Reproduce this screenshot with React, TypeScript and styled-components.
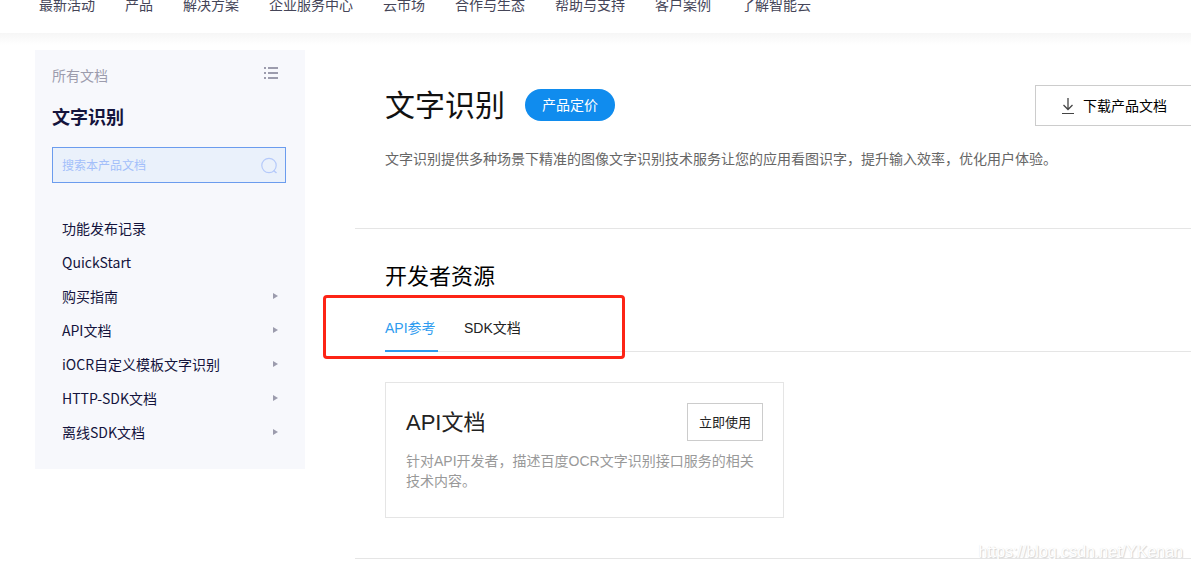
import React from "react";
import styled, { createGlobalStyle } from "styled-components";

const GlobalStyle = createGlobalStyle`
  *, *::before, *::after { box-sizing: border-box; }
  body {
    margin: 0;
    background: #fff;
    color: #000;
    font: 14px/20px "Liberation Sans", "Noto Sans CJK SC", sans-serif;
  }
  h1, h2, h3, p, ul { margin: 0; padding: 0; font-weight: 400; }
  ul { list-style: none; }
  a { color: inherit; text-decoration: none; }
  button { font-family: inherit; cursor: pointer; }
`;

const Page = styled.div`
  position: relative;
  overflow: hidden;
`;

const Header = styled.header`
  height: 33px;
`;

const Nav = styled.nav`
  display: flex;
  gap: 30px;
  padding-left: 39px;
  line-height: 10px;
  color: #454558;
  white-space: nowrap;
`;

const Body = styled.div`
  display: flex;
  align-items: flex-start;
  gap: 50px;
  padding: 17px 0 0 35px;
  background: linear-gradient(#f6f6f6, #fff 12px);
`;

const Sidebar = styled.aside`
  flex: 0 0 270px;
  padding: 15px 19px 20px 17px;
  background: #f7f8fc;
  color: #14143c;
  font-family: "Noto Sans CJK SC", sans-serif;
`;

const SideTop = styled.div`
  display: flex;
  justify-content: space-between;
  padding-right: 8px;
  color: #9c9cad;
`;

const SideTitle = styled.h2`
  margin: 18px 0;
  font-size: 18px;
  line-height: 26px;
  font-weight: 700;
`;

const SearchBox = styled.label`
  display: flex;
  align-items: center;
  height: 36px;
  padding: 0 7px 0 9px;
  border: 1px solid #6b9cee;
  background: #eaf1fb;
`;

const SearchInput = styled.input`
  flex: 1;
  min-width: 0;
  padding: 0;
  border: 0;
  outline: 0;
  background: transparent;
  font: 12px/20px "Noto Sans CJK SC", sans-serif;
  color: #14143c;
  &::placeholder { color: #a3bffa; opacity: 1; }
`;

const Menu = styled.ul`
  margin-top: 28px;
  padding: 0 8px 0 10px;
`;

const MenuLink = styled.a`
  display: flex;
  align-items: center;
  justify-content: space-between;
  height: 34px;
`;

const Main = styled.main`
  flex: 1;
  min-width: 0;
`;

const Section = styled.section`
  padding-left: 30px;
  border-bottom: 1px solid #e5e5e5;
`;

const Intro = styled(Section)`
  height: 179px;
  padding-top: 35px;
`;

const IntroHead = styled.div`
  display: flex;
  align-items: flex-start;
  height: 41px;
`;

const Title = styled.h1`
  margin-right: 20px;
  font-size: 30px;
  line-height: 42px;
  color: #111;
`;

const PriceButton = styled.button`
  height: 32px;
  margin-top: 4px;
  padding: 0 17px 2px;
  border: 0;
  border-radius: 16px;
  background: #108cee;
  color: #fff;
  font-size: 14px;
`;

const DownloadButton = styled.button`
  display: flex;
  align-items: center;
  gap: 8px;
  height: 41px;
  margin-left: auto;
  padding: 0 24px 2px 25px;
  border: 1px solid #ccc;
  border-right: 0;
  background: #fff;
  color: #000;
  font-size: 14px;
`;

const Summary = styled.p`
  margin-top: 23px;
  color: #666;
`;

const Resources = styled(Section)`
  padding-top: 32px;
  padding-bottom: 40px;
`;

const Heading = styled.h2`
  font-size: 22px;
  line-height: 32px;
`;

const TabArea = styled.div`
  position: relative;
`;

const Tabs = styled.div`
  display: flex;
  gap: 26px;
  height: 59px;
  border-bottom: 1px solid #e5e5e5;
`;

const Tab = styled.button<{ $active?: boolean }>`
  min-width: 53px;
  height: 59px;
  padding: 10px 0 0;
  border: 0;
  border-bottom: 2px solid ${(p) => (p.$active ? "#2d9bef" : "transparent")};
  background: none;
  color: ${(p) => (p.$active ? "#2d9bef" : "#222")};
  font-size: 14px;
  text-align: left;
`;

const Marker = styled.div`
  position: absolute;
  top: 2px;
  left: -62px;
  width: 302px;
  height: 64px;
  border: 3px solid #fd2416;
  border-radius: 4px;
  pointer-events: none;
`;

const Card = styled.article`
  width: 399px;
  max-width: 100%;
  margin-top: 30px;
  padding: 20px 20px 26px;
  border: 1px solid #e5e5e5;
`;

const CardHead = styled.div`
  display: flex;
  align-items: center;
  justify-content: space-between;
`;

const CardTitle = styled.h3`
  font-size: 22px;
  line-height: 34px;
  padding-top: 2px;
  color: #222;
`;

const UseButton = styled.button`
  height: 38px;
  padding: 0 11px 2px;
  border: 1px solid #ccc;
  background: #fff;
  color: #222;
  font-size: 13px;
`;

const CardText = styled.p`
  margin-top: 10px;
  color: #999;
`;

const Watermark = styled.div`
  position: absolute;
  right: 8px;
  bottom: -3px;
  font-size: 16px;
  line-height: 20px;
  color: #fff;
  text-shadow: 1px 1px 1px #d4d4d4, 0 0 1px #e4e4e4;
`;

const navItems = ["最新活动", "产品", "解决方案", "企业服务中心", "云市场", "合作与生态", "帮助与支持", "客户案例", "了解智能云"];

const menuItems = [
  { label: "功能发布记录", children: false },
  { label: "QuickStart", children: false },
  { label: "购买指南", children: true },
  { label: "API文档", children: true },
  { label: "iOCR自定义模板文字识别", children: true },
  { label: "HTTP-SDK文档", children: true },
  { label: "离线SDK文档", children: true },
];

const ListIcon = () => (
  <svg width="14" height="16" viewBox="0 0 14 16" fill="#9c9cad" aria-hidden="true">
    <path d="M0 2h2v2H0zM4 2h10v2H4zM0 7h2v2H0zM4 7h10v2H4zM0 12h2v2H0zM4 12h10v2H4z" />
  </svg>
);

const SearchIcon = () => (
  <svg width="17" height="17" viewBox="0 0 17 17" fill="none" stroke="#b5cafa" aria-hidden="true">
    <circle cx="8" cy="8.500" r="7.200" strokeWidth="1.200" />
    <path d="M12.500 13.500l3 2.500" strokeWidth="1.500" />
  </svg>
);

const DownloadIcon = () => (
  <svg width="14" height="18" viewBox="0 0 14 18" fill="none" stroke="#444" aria-hidden="true">
    <path d="M7 2v11.500M2.500 9L7 13.500 11.500 9" strokeWidth="1.300" />
    <path d="M1 17.500h12" />
  </svg>
);

const Caret = () => (
  <svg width="5" height="6" viewBox="0 0 5 6" fill="#9c9cad" aria-hidden="true">
    <path d="M0 0l5 3-5 3z" />
  </svg>
);

export default function App() {
  return (
    <Page>
      <GlobalStyle />
      <Header>
        <Nav>
          {navItems.map((item) => (
            <a href="#" key={item}>{item}</a>
          ))}
        </Nav>
      </Header>
      <Body>
        <Sidebar>
          <SideTop>
            <a href="#">所有文档</a>
            <ListIcon />
          </SideTop>
          <SideTitle>文字识别</SideTitle>
          <SearchBox>
            <SearchInput type="text" placeholder="搜索本产品文档" aria-label="搜索本产品文档" />
            <SearchIcon />
          </SearchBox>
          <Menu>
            {menuItems.map((item) => (
              <li key={item.label}>
                <MenuLink href="#">
                  {item.label}
                  {item.children && <Caret />}
                </MenuLink>
              </li>
            ))}
          </Menu>
        </Sidebar>
        <Main>
          <Intro>
            <IntroHead>
              <Title>文字识别</Title>
              <PriceButton>产品定价</PriceButton>
              <DownloadButton>
                <DownloadIcon />
                下载产品文档
              </DownloadButton>
            </IntroHead>
            <Summary>文字识别提供多种场景下精准的图像文字识别技术服务让您的应用看图识字，提升输入效率，优化用户体验。</Summary>
          </Intro>
          <Resources>
            <Heading>开发者资源</Heading>
            <TabArea>
              <Tabs role="tablist">
                <Tab role="tab" aria-selected="true" $active>API参考</Tab>
                <Tab role="tab" aria-selected="false">SDK文档</Tab>
              </Tabs>
              <Marker />
            </TabArea>
            <Card>
              <CardHead>
                <CardTitle>API文档</CardTitle>
                <UseButton>立即使用</UseButton>
              </CardHead>
              <CardText>针对API开发者，描述百度OCR文字识别接口服务的相关技术内容。</CardText>
            </Card>
          </Resources>
        </Main>
      </Body>
      <Watermark>https://blog.csdn.net/YKenan</Watermark>
    </Page>
  );
}
